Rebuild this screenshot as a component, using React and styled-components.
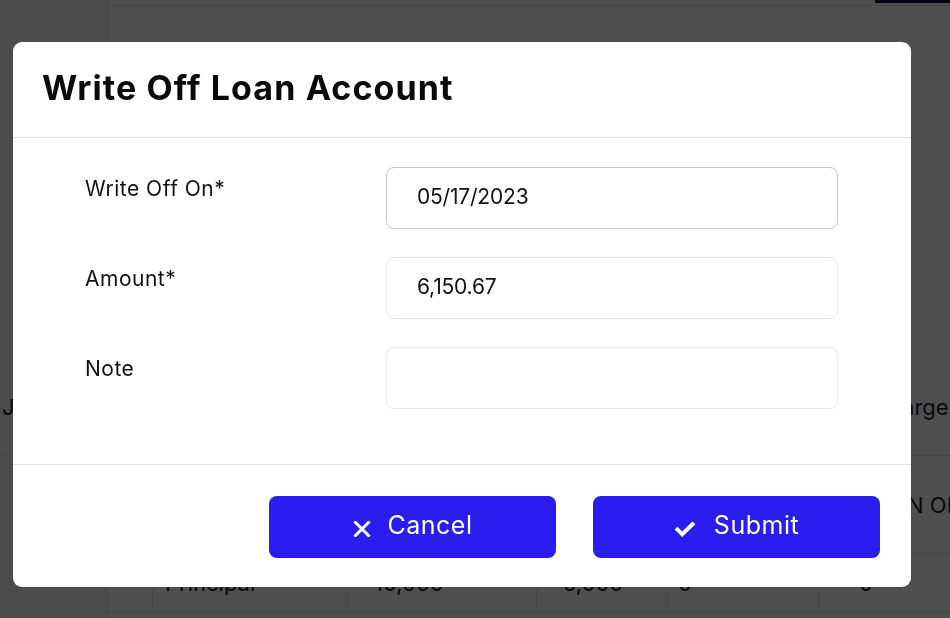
import React from "react";
import styled, { createGlobalStyle } from "styled-components";

const GlobalStyle = createGlobalStyle`
  * { box-sizing: border-box; }
  html, body { margin: 0; padding: 0; height: 100%; }
  body {
    font-family: Inter, "Noto Sans", sans-serif;
    background: #fff;
    color: #111;
    overflow: hidden;
  }
`;

const Page = styled.div`
  display: flex;
  height: 618px;
`;

const Sidebar = styled.aside`
  width: 108px;
  flex-shrink: 0;
  background: #f6f6f6;
  border-right: 1px solid #e2e2e2;
`;

const Main = styled.main`
  flex: 1;
  min-width: 0;
  display: flex;
  flex-direction: column;
`;

const TopBar = styled.div`
  height: 6px;
  border-bottom: 1px solid #ddd;
  display: flex;
  justify-content: flex-end;
`;

const TopButton = styled.div`
  width: 75px;
  height: 3px;
  background: #0a0f45;
`;

const Spacer = styled.div`
  height: 352px;
`;

const Table = styled.div`
  display: flex;
  flex-direction: column;
  margin-left: -108px;
`;

const TableRow = styled.div`
  display: grid;
  grid-template-columns: 152px 195px 189px 131px 151px 1fr;
  height: ${(p) => p.$h}px;
  align-items: center;
  border-bottom: 1px solid #e4e4e4;
  font-size: 22px;
  color: #222;
`;

const Cell = styled.div`
  height: 100%;
  display: flex;
  align-items: center;
  padding-left: ${(p) => p.$pad || 0}px;
  border-left: ${(p) => (p.$line ? "1px solid #e4e4e4" : "none")};
  white-space: nowrap;
  overflow: hidden;
`;

const Overlay = styled.div`
  position: fixed;
  inset: 0;
  background: rgba(0, 0, 0, 0.69);
  display: flex;
  align-items: flex-start;
  padding: 42px 0 0 13px;
`;

const Modal = styled.div`
  width: 898px;
  height: 545px;
  background: #fff;
  border-radius: 9px;
  display: flex;
  flex-direction: column;
  overflow: hidden;
`;

const Header = styled.div`
  height: 96px;
  border-bottom: 1px solid #e2e2e2;
  display: flex;
  align-items: center;
  padding: 0 29px 4px;
`;

const Title = styled.h2`
  margin: 0;
  font-size: 34px;
  font-weight: 700;
  color: #0a0a0a;
  letter-spacing: 1.1px;
`;

const Body = styled.div`
  flex: 1;
  padding: 29px 72px 0;
  display: flex;
  flex-direction: column;
  gap: 28px;
  border-bottom: 1px solid #e2e2e2;
`;

const Field = styled.div`
  display: flex;
  align-items: flex-start;
`;

const Label = styled.label`
  width: 301px;
  padding-top: 9px;
  font-size: 21px;
  letter-spacing: 0.5px;
  color: #111;
`;

const Input = styled.div`
  width: 452px;
  height: 62px;
  border: 1px solid ${(p) => (p.$strong ? "#c7c7c7" : "#e6e6e6")};
  border-radius: 8px;
  display: flex;
  align-items: center;
  padding: 0 30px 4px;
  font-size: 21px;
  letter-spacing: -0.2px;
  color: #111;
`;

const Footer = styled.div`
  height: 122px;
  display: flex;
  justify-content: flex-end;
  align-items: flex-start;
  gap: 37px;
  padding: 31px 31px 0 0;
`;

const Button = styled.button`
  width: 287px;
  height: 62px;
  border: none;
  border-radius: 8px;
  background: #2b1df0;
  color: #fff;
  font-family: inherit;
  font-size: 25px;
  letter-spacing: 0.5px;
  display: flex;
  align-items: center;
  justify-content: center;
  gap: ${(p) => p.$gap}px;
  cursor: pointer;
  padding: 0 0 5px;
`;

const Icon = styled.svg`
  width: ${(p) => p.$w}px;
  height: 16px;
  margin-top: 8px;
`;

const XIcon = () => (
  <Icon $w={18} viewBox="0 0 18 16" fill="none" stroke="#fff" strokeWidth="3" strokeLinecap="square">
    <path d="M2.5 1.5l13 13M15.5 1.5l-13 13" />
  </Icon>
);

const CheckIcon = () => (
  <Icon $w={22} viewBox="0 0 22 16" fill="#fff">
    <path d="M0.6 8.6 L3.4 5.8 L8.2 10.4 L18.4 0.4 L21.4 3.2 L8.2 16 Z" />
  </Icon>
);

export default function App() {
  return (
    <>
      <GlobalStyle />
      <Page>
        <Sidebar />
        <Main>
          <TopBar>
            <TopButton />
          </TopBar>
          <Spacer />
          <Table>
            <TableRow $h={98}>
              <Cell $pad={2}>Journal</Cell>
              <Cell />
              <Cell />
              <Cell />
              <Cell />
              <Cell $pad={55}>Charges</Cell>
            </TableRow>
            <TableRow $h={98}>
              <Cell />
              <Cell />
              <Cell />
              <Cell />
              <Cell />
              <Cell $pad={46}>LOAN OF</Cell>
            </TableRow>
            <TableRow $h={58}>
              <Cell />
              <Cell $line $pad={12}>Principal</Cell>
              <Cell $line $pad={26}>10,000</Cell>
              <Cell $line $pad={26}>5,000</Cell>
              <Cell $line $pad={10}>0</Cell>
              <Cell $line $pad={40}>0</Cell>
            </TableRow>
          </Table>
        </Main>
      </Page>
      <Overlay>
        <Modal role="dialog" aria-label="Write Off Loan Account">
          <Header>
            <Title>Write Off Loan Account</Title>
          </Header>
          <Body>
            <Field>
              <Label>Write Off On*</Label>
              <Input $strong>05/17/2023</Input>
            </Field>
            <Field>
              <Label>Amount*</Label>
              <Input>6,150.67</Input>
            </Field>
            <Field>
              <Label>Note</Label>
              <Input />
            </Field>
          </Body>
          <Footer>
            <Button $gap={17}>
              <XIcon />
              Cancel
            </Button>
            <Button $gap={18}>
              <CheckIcon />
              Submit
            </Button>
          </Footer>
        </Modal>
      </Overlay>
    </>
  );
}
